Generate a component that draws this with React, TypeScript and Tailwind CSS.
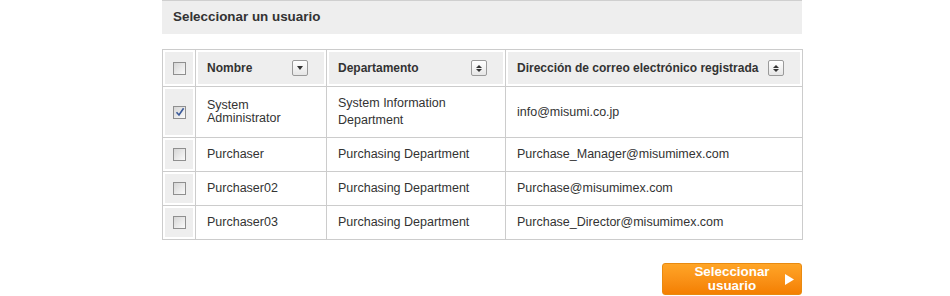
import React from 'react';

type User = { name: string; dept: string; email: string; checked?: boolean };

const users: User[] = [
  { name: 'System Administrator', dept: 'System Information Department', email: 'info@misumi.co.jp', checked: true },
  { name: 'Purchaser', dept: 'Purchasing Department', email: 'Purchase_Manager@misumimex.com' },
  { name: 'Purchaser02', dept: 'Purchasing Department', email: 'Purchase@misumimex.com' },
  { name: 'Purchaser03', dept: 'Purchasing Department', email: 'Purchase_Director@misumimex.com' },
];

function Check({ checked }: { checked?: boolean }) {
  return (
    <span className="relative block w-[13px] h-[13px] border border-[#8f8f8f] bg-gradient-to-br from-[#d6d6d6] to-[#fafafa]">
      {checked && (
        <svg className="absolute left-[1px] top-[0px]" width="10" height="10" viewBox="0 0 10 10">
          <path d="M1.5 5.2 L4 8 L8.6 1.2" fill="none" stroke="#3b5a9a" strokeWidth="1.6" />
        </svg>
      )}
    </span>
  );
}

function SortBox({ single }: { single?: boolean }) {
  return (
    <span className="flex flex-col items-center justify-center gap-[1px] w-[16px] h-[16px] rounded-[2px] border border-[#9a9a9a] bg-gradient-to-b from-white to-[#e6e6e6]">
      {single ? (
        <svg width="6" height="4" viewBox="0 0 6 4"><path d="M0 0 H6 L3 4 Z" fill="#333" /></svg>
      ) : (
        <>
          <svg width="6" height="3" viewBox="0 0 6 3"><path d="M0 3 H6 L3 0 Z" fill="#333" /></svg>
          <svg width="6" height="3" viewBox="0 0 6 3"><path d="M0 0 H6 L3 3 Z" fill="#333" /></svg>
        </>
      )}
    </span>
  );
}

function HeadCell({ label, single }: { label: string; single?: boolean }) {
  return (
    <th className="border border-[#cccccc] p-[2px]">
      <div className="flex items-center justify-between h-[32px] bg-[#eeeeee] pl-[9px] pr-[16px] text-left text-[12px] font-bold text-[#333]">
        <span>{label}</span>
        <SortBox single={single} />
      </div>
    </th>
  );
}

export default function App() {
  return (
    <div className="w-[950px] h-[296px] bg-white font-['Liberation_Sans',Arial,sans-serif] text-[#333]">
      <div className="ml-[162px] w-[640px]">
        <div className="h-[34px] border-t border-[#cfcfcf] bg-[#eeeeee] pl-[11px] flex items-center text-[13.4px] font-bold text-[#333]">
          Seleccionar un usuario
        </div>

        <table className="mt-[15px] w-[640px] border-collapse table-fixed">
          <colgroup>
            <col className="w-[33px]" />
            <col className="w-[131px]" />
            <col className="w-[179px]" />
            <col className="w-[297px]" />
          </colgroup>
          <thead>
            <tr>
              <th className="border border-[#cccccc] p-[2px]">
                <div className="flex items-center justify-center h-[32px] bg-[#eeeeee]">
                  <Check />
                </div>
              </th>
              <HeadCell label="Nombre" single />
              <HeadCell label="Departamento" />
              <HeadCell label="Dirección de correo electrónico registrada" />
            </tr>
          </thead>
          <tbody className="text-[12.5px]">
            {users.map((u, i) => {
              const h = i === 0 ? 'h-[46px]' : 'h-[29px]';
              return (
                <tr key={u.name}>
                  <td className="border border-[#cccccc] p-[2px]">
                    <div className={`flex items-center justify-center bg-[#eeeeee] ${h}`}>
                      <Check checked={u.checked} />
                    </div>
                  </td>
                  <td className="border border-[#cccccc] p-[2px]">
                    <div className={`flex items-center pl-[9px] leading-[13px] ${h}`}>
                      {i === 0 ? <span>System<br />Administrator</span> : u.name}
                    </div>
                  </td>
                  <td className="border border-[#cccccc] p-[2px]">
                    <div className={`flex items-center pl-[9px] leading-[17px] ${h}`}>
                      {i === 0 ? <span>System Information<br />Department</span> : u.dept}
                    </div>
                  </td>
                  <td className="border border-[#cccccc] p-[2px]">
                    <div className={`flex items-center pl-[9px] ${h}`}>{u.email}</div>
                  </td>
                </tr>
              );
            })}
          </tbody>
        </table>

        <div className="flex justify-end mt-[23px]">
          <button className="relative w-[140px] h-[32px] rounded-[3px] border border-[#e98a10] bg-gradient-to-b from-[#ffa526] to-[#f47f00] text-white text-[13.4px] font-bold leading-[14px]">
            <span className="block">Seleccionar<br />usuario</span>
            <svg className="absolute right-[7px] top-[10px]" width="9" height="11" viewBox="0 0 9 11">
              <path d="M0 0 L9 5.5 L0 11 Z" fill="#fff" />
            </svg>
          </button>
        </div>
      </div>
    </div>
  );
}
